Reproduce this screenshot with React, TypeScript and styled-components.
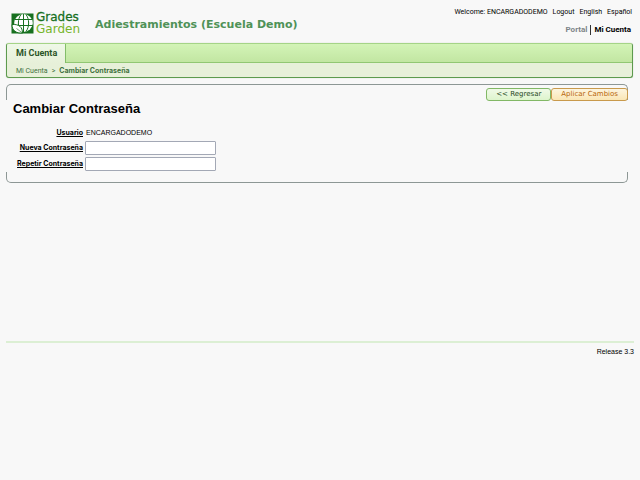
import React from "react";
import styled, { createGlobalStyle } from "styled-components";

const GlobalStyle = createGlobalStyle`
  * { box-sizing: border-box; }
  body {
    margin: 0;
    background: #f8f8f8;
    color: #000;
    font-family: "Liberation Sans", Arial, sans-serif;
    font-size: 8px;
  }
  a { color: inherit; text-decoration: none; }
`;

const Page = styled.div`
  padding: 0 6px;
`;

const Header = styled.header`
  display: flex;
  align-items: flex-start;
  height: 43px;
  padding: 0 2px 0 5px;
`;

const Logo = styled.a`
  display: flex;
  align-items: center;
  gap: 2px;
  margin-top: 11px;
`;

const LogoWords = styled.span`
  display: flex;
  flex-direction: column;
  width: 44px;
  font-family: "DejaVu Sans", Verdana, sans-serif;
  font-size: 12px;
  line-height: 12px;
  color: #76b52a;
`;

const LogoFirst = styled.span`
  color: #17701f;
  -webkit-text-stroke: 0.3px #17701f;
`;

const SiteTitle = styled.div`
  flex: 1;
  margin: 17px 0 0 15px;
  font: bold 11px/16px "DejaVu Sans", Verdana, sans-serif;
  color: #4f9257;
  white-space: nowrap;
`;

const HeaderRight = styled.div`
  display: flex;
  flex-direction: column;
  align-items: flex-end;
  gap: 7px;
  padding-top: 7px;
  white-space: nowrap;
  font-family: Roboto, Arial, sans-serif;
`;

const UserLinks = styled.div`
  display: flex;
  gap: 5px;
  font-size: 7px;
  line-height: 11px;
`;

const Areas = styled.nav`
  display: flex;
  align-items: center;
  padding-right: 1px;
  font-size: 8px;
  font-weight: bold;
  line-height: 10px;
`;

const AreaLink = styled.a<{ $current?: boolean }>`
  color: ${(p) => (p.$current ? "#000" : "#7d8588")};
  & + & {
    margin-left: 3px;
    padding-left: 3px;
    border-left: 1px solid #333;
  }
`;

const NavBox = styled.nav`
  margin-right: 1px;
  border: 1px solid #5d9a4e;
  border-top-color: #a5d487;
  border-radius: 3px;
  overflow: hidden;
  background: #e7f0d9;
  box-shadow: 0 0 1px #a9bda0;
`;

const Tabs = styled.div`
  display: flex;
  height: 19px;
  background: linear-gradient(#d3f4b7, #c2e6a2);
  border-bottom: 1px solid #91c773;
`;

const Tab = styled.a`
  height: 19px;
  padding: 0 8px 0 9px;
  border-right: 1px solid #83bd69;
  background: linear-gradient(#eff8e8, #e7f0d9);
  font: bold 9px/19px Roboto, Arial, sans-serif;
  color: #2c5428;
`;

const Crumbs = styled.div`
  display: flex;
  align-items: center;
  gap: 4px;
  padding: 3px 9px 1px;
  font-family: Roboto, Arial, sans-serif;
  font-size: 7px;
  line-height: 10px;
  color: #3f7040;
`;

const CurrentCrumb = styled.strong`
  font-family: Inter, Arial, sans-serif;
`;

const Panel = styled.main`
  position: relative;
  margin: 6px 6px 0 0;
  padding: 4px 0 12px 7px;
  &::before, &::after {
    content: "";
    position: absolute;
    left: 0;
    right: 0;
    pointer-events: none;
    border: 1px solid #8d9795;
  }
  &::before {
    top: 0;
    height: 15px;
    border-bottom: 0;
    border-radius: 5px 5px 0 0;
  }
  &::after {
    bottom: 0;
    height: 10px;
    border-top: 0;
    border-radius: 0 0 5px 5px;
  }
`;

const Actions = styled.div`
  position: relative;
  z-index: 1;
  display: flex;
  justify-content: flex-end;
`;

const Action = styled.button<{ $accent?: boolean }>`
  height: 13px;
  padding: 0 9px;
  border: 1px solid ${(p) => (p.$accent ? "#c99a4c" : "#82b866")};
  border-radius: 3px;
  background: ${(p) =>
    p.$accent ? "linear-gradient(#fdf5df, #fae6b5)" : "linear-gradient(#f0fae8, #ddf4cc)"};
  color: ${(p) => (p.$accent ? "#b8660a" : "#1f4a1c")};
  font: 7px/11px "DejaVu Sans", Verdana, sans-serif;
`;

const Heading = styled.h1`
  margin: 0 0 10px;
  font-size: 13px;
  line-height: 16px;
`;

const Form = styled.form`
  display: grid;
  grid-template-columns: 71px 131px;
  column-gap: 1px;
  row-gap: 2px;
  align-items: center;
  font-family: Inter, Arial, sans-serif;
  font-size: 7px;
  line-height: 12px;
`;

const Label = styled.label`
  justify-self: end;
  padding-right: 1px;
  font-weight: bold;
  text-decoration: underline;
  white-space: nowrap;
`;

const UserName = styled.output`
  padding-left: 1px;
  font-family: "Liberation Sans", Arial, sans-serif;
`;

const Input = styled.input`
  width: 100%;
  height: 14px;
  padding: 0 2px;
  border: 1px solid #a3a8b5;
  border-radius: 1px;
  background: #fff;
  font: inherit;
`;

const Footer = styled.footer`
  margin-top: 158px;
  padding-top: 3px;
  border-top: 2px solid #dcefd4;
  text-align: right;
  font-size: 7px;
  line-height: 12px;
`;

function Mark() {
  return (
    <svg width="23" height="21" viewBox="0 0 23 21" aria-hidden="true">
      <rect x="0.5" y="0.5" width="22" height="20" fill="#17701f" />
      <ellipse cx="12.5" cy="10" rx="9.3" ry="9" fill="#fff" />
      <g fill="none" stroke="#17701f" strokeWidth="1">
        <path d="M12.500 1v18M4 6.500h17M3 12.500h19M10 1.500C6.500 6 6.500 14 10 18.500M15 1.500C18.500 6 18.500 14 15 18.500" />
      </g>
      <path d="M1 11.500c7-.5 10.500 2.500 10.500 8.500C5 20.500 1 17.500 1 11.500Z" fill="#fff" stroke="#17701f" strokeWidth="1" />
      <path d="M5.500 15.500l6 4.500" stroke="#17701f" strokeWidth="0.6" />
    </svg>
  );
}

export default function App() {
  return (
    <>
      <GlobalStyle />
      <Page>
        <Header>
          <Logo href="#">
            <Mark />
            <LogoWords>
              <LogoFirst>Grades</LogoFirst>
              <span>Garden</span>
            </LogoWords>
          </Logo>
          <SiteTitle>Adiestramientos (Escuela Demo)</SiteTitle>
          <HeaderRight>
            <UserLinks>
              <span>Welcome: ENCARGADODEMO</span>
              <a href="#">Logout</a>
              <a href="#">English</a>
              <a href="#">Español</a>
            </UserLinks>
            <Areas>
              <AreaLink href="#">Portal</AreaLink>
              <AreaLink href="#" $current>Mi Cuenta</AreaLink>
            </Areas>
          </HeaderRight>
        </Header>
        <NavBox>
          <Tabs>
            <Tab href="#">Mi Cuenta</Tab>
          </Tabs>
          <Crumbs>
            <a href="#">Mi Cuenta</a>
            <span>&gt;</span>
            <CurrentCrumb>Cambiar Contraseña</CurrentCrumb>
          </Crumbs>
        </NavBox>
        <Panel>
          <Actions>
            <Action type="button">&lt;&lt; Regresar</Action>
            <Action type="submit" form="password-form" $accent>Aplicar Cambios</Action>
          </Actions>
          <Heading>Cambiar Contraseña</Heading>
          <Form id="password-form" onSubmit={(e) => e.preventDefault()}>
            <Label htmlFor="user">Usuario</Label>
            <UserName id="user">ENCARGADODEMO</UserName>
            <Label htmlFor="new-password">Nueva Contraseña</Label>
            <Input id="new-password" type="password" />
            <Label htmlFor="repeat-password">Repetir Contraseña</Label>
            <Input id="repeat-password" type="password" />
          </Form>
        </Panel>
        <Footer>Release 3.3</Footer>
      </Page>
    </>
  );
}
